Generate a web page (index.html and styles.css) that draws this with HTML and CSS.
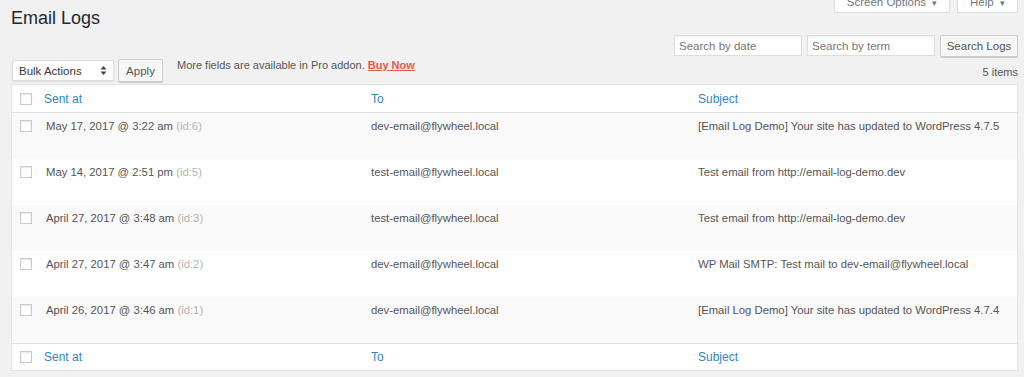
FILE: index.html
```html
<!DOCTYPE html>
<html>
<head>
  <link rel="stylesheet" href="styles.css">
</head>
<body>
  <div class="wrap">
    <div class="page-head">
      <h1 class="page-title">Email Logs</h1>
      <div class="meta-links">
        <span class="meta-tab tab-options">Screen Options <span class="caret">&#9662;</span></span>
        <span class="meta-tab tab-help">Help <span class="caret">&#9662;</span></span>
      </div>
    </div>

    <div class="search-box">
      <input class="search-input" type="text" placeholder="Search by date">
      <input class="search-input" type="text" placeholder="Search by term">
      <button class="btn btn-search">Search Logs</button>
    </div>

    <div class="tablenav">
      <div class="bulk-select">
        <span>Bulk Actions</span>
        <svg class="updown" width="7" height="11" viewBox="0 0 7 11">
          <path d="M3.5 1 L6.5 4.5 L0.5 4.5 Z M3.5 10 L6.5 6.5 L0.5 6.5 Z" fill="#444"/>
        </svg>
      </div>
      <button class="btn btn-apply">Apply</button>
      <span class="pro-note">More fields are available in Pro addon. <a class="buy-now" href="#">Buy Now</a></span>
      <span class="item-count">5 items</span>
    </div>

    <table class="logs-table">
      <colgroup>
        <col class="col-cb">
        <col>
        <col>
        <col>
      </colgroup>
      <thead>
        <tr>
          <th class="cb"><input type="checkbox" class="check"></th>
          <th><a href="#">Sent at</a></th>
          <th><a href="#">To</a></th>
          <th><a href="#">Subject</a></th>
        </tr>
      </thead>
      <tbody>
        <tr class="alt">
          <td class="cb"><input type="checkbox" class="check"></td>
          <td class="sent">May 17, 2017 @ 3:22 am <span class="log-id">(id:6)</span></td>
          <td>dev-email@flywheel.local</td>
          <td>[Email Log Demo] Your site has updated to WordPress 4.7.5</td>
        </tr>
        <tr>
          <td class="cb"><input type="checkbox" class="check"></td>
          <td class="sent">May 14, 2017 @ 2:51 pm <span class="log-id">(id:5)</span></td>
          <td>test-email@flywheel.local</td>
          <td>Test email from http://email-log-demo.dev</td>
        </tr>
        <tr class="alt">
          <td class="cb"><input type="checkbox" class="check"></td>
          <td class="sent">April 27, 2017 @ 3:48 am <span class="log-id">(id:3)</span></td>
          <td>test-email@flywheel.local</td>
          <td>Test email from http://email-log-demo.dev</td>
        </tr>
        <tr>
          <td class="cb"><input type="checkbox" class="check"></td>
          <td class="sent">April 27, 2017 @ 3:47 am <span class="log-id">(id:2)</span></td>
          <td>dev-email@flywheel.local</td>
          <td>WP Mail SMTP: Test mail to dev-email@flywheel.local</td>
        </tr>
        <tr class="alt">
          <td class="cb"><input type="checkbox" class="check"></td>
          <td class="sent">April 26, 2017 @ 3:46 am <span class="log-id">(id:1)</span></td>
          <td>dev-email@flywheel.local</td>
          <td>[Email Log Demo] Your site has updated to WordPress 4.7.4</td>
        </tr>
      </tbody>
      <tfoot>
        <tr>
          <th class="cb"><input type="checkbox" class="check"></th>
          <th><a href="#">Sent at</a></th>
          <th><a href="#">To</a></th>
          <th><a href="#">Subject</a></th>
        </tr>
      </tfoot>
    </table>
  </div>
</body>
</html>
```

FILE: styles.css
```css
body {
  margin: 0;
  background: #f1f1f1;
  font-family: 'Liberation Sans', Arial, sans-serif;
  color: #555;
  font-size: 11px;
}
.wrap {
  padding: 0 6px 0 11px;
}
.page-head {
  display: flex;
  justify-content: space-between;
  align-items: flex-start;
}
.page-title {
  margin: 7px 0 0;
  font-size: 18px;
  line-height: 22px;
  font-weight: normal;
  color: #23282d;
}
.meta-links {
  display: flex;
  gap: 7px;
}
.meta-tab {
  display: block;
  height: 22px;
  margin-top: -9px;
  line-height: 22px;
  background: #fff;
  border: 1px solid #ddd;
  border-top: 0;
  box-sizing: border-box;
  color: #72777c;
  font-size: 11.5px;
  text-align: center;
}
.tab-options {
  width: 116px;
}
.tab-help {
  width: 61px;
}
.caret {
  font-size: 9px;
  margin-left: 3px;
}
.search-box {
  display: flex;
  justify-content: flex-end;
  align-items: flex-start;
  gap: 5px;
  margin-top: 6px;
}
.search-input {
  width: 128px;
  height: 21px;
  box-sizing: border-box;
  margin: 0;
  padding: 0 4px;
  border: 1px solid #ddd;
  box-shadow: inset 0 1px 2px rgba(0, 0, 0, 0.07);
  background: #fff;
  font-family: inherit;
  font-size: 11.5px;
  color: #333;
}
.search-input::placeholder {
  color: #757575;
}
.btn {
  margin: 0;
  padding: 0;
  box-sizing: border-box;
  background: #f7f7f7;
  border: 1px solid #ccc;
  border-radius: 2px;
  box-shadow: 0 1px 0 #ccc;
  color: #555;
  font-family: inherit;
  font-size: 11.5px;
}
.btn-search {
  width: 78px;
  height: 22px;
}
.tablenav {
  display: flex;
  align-items: center;
  height: 23px;
  margin-top: 2px;
}
.bulk-select {
  display: flex;
  align-items: center;
  justify-content: space-between;
  width: 102px;
  height: 21px;
  box-sizing: border-box;
  margin-left: 1px;
  padding: 0 6px 0 6px;
  background: #fff;
  border: 1px solid #ddd;
  box-shadow: 0 1px 2px rgba(0, 0, 0, 0.07);
  color: #32373c;
  font-size: 11.5px;
}
.btn-apply {
  width: 45px;
  height: 23px;
  margin-left: 4px;
}
.pro-note {
  align-self: flex-start;
  margin-left: 14px;
  line-height: 12px;
  color: #555;
}
.buy-now {
  color: #e4564c;
  font-weight: bold;
}
.item-count {
  margin-left: auto;
  padding-top: 3px;
  color: #555;
}
.logs-table {
  width: 100%;
  margin-top: 2px;
  table-layout: fixed;
  border-collapse: separate;
  border-spacing: 0;
  background: #fff;
  border: 1px solid #e5e5e5;
  box-shadow: 0 1px 1px rgba(0, 0, 0, 0.04);
}
.col-cb {
  width: 24px;
}
.logs-table th {
  height: 27px;
  padding: 0 8px;
  text-align: left;
  font-weight: normal;
  font-size: 12px;
  vertical-align: middle;
}
.logs-table thead th {
  border-bottom: 1px solid #e1e1e1;
}
.logs-table tfoot th {
  height: 26px;
  border-top: 1px solid #e1e1e1;
}
.logs-table th a {
  color: #3286c0;
  text-decoration: none;
}
.logs-table th.cb,
.logs-table td.cb {
  padding: 0 0 0 8px;
}
.logs-table td {
  height: 46px;
  box-sizing: border-box;
  padding: 5px 8px;
  vertical-align: top;
  line-height: 16px;
  font-size: 11.3px;
  white-space: nowrap;
}
.logs-table td.cb {
  padding-top: 7px;
}
.logs-table td.sent {
  padding-left: 10px;
}
.logs-table tr.alt td {
  background: #f9f9f9;
}
.log-id {
  color: #b4b4b4;
}
.check {
  appearance: none;
  display: block;
  width: 12px;
  height: 12px;
  margin: 0;
  background: #fff;
  border: 1px solid #c8cbce;
  box-shadow: inset 0 1px 2px rgba(0, 0, 0, 0.1);
}
```
